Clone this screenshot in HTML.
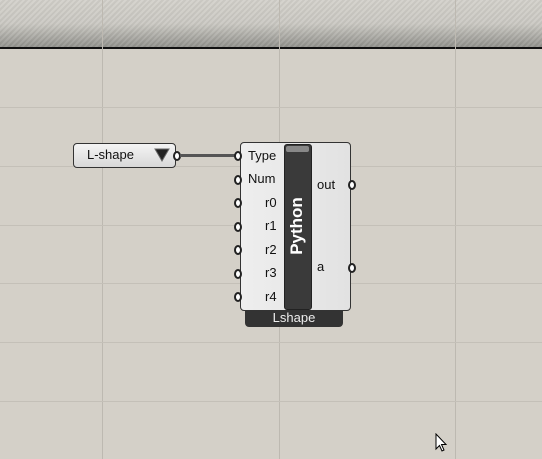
<!DOCTYPE html><html><head><style>
body{margin:0;width:542px;height:459px;overflow:hidden;background:#d4d0c8;font-family:"Liberation Sans",sans-serif;position:relative}
.top{position:absolute;left:0;top:0;width:542px;height:47px;background:linear-gradient(#d2d0ca,#cac8c2 50%,#92928d);}
.top:after{content:"";position:absolute;inset:0;background:repeating-linear-gradient(135deg,rgba(255,255,255,.08) 0 2px,rgba(0,0,0,.04) 2px 4px)}
.bl{position:absolute;left:0;top:47px;width:542px;height:2px;background:#111}
.v{position:absolute;top:0;width:1px;height:459px;background:#bdb9b1}
.h{position:absolute;left:0;height:1px;width:542px;background:#c4c0b8}
.abs{position:absolute}
.g{position:absolute;width:4px;height:6px;border:2px solid #222;border-radius:50%;background:#fff}
.lab{position:absolute;font-size:13px;color:#111}
</style></head><body>
<div class="top"></div><div class="bl"></div>
<div class="v" style="left:102px"></div><div class="v" style="left:279px"></div><div class="v" style="left:455px"></div>
<div class="h" style="top:107px"></div><div class="h" style="top:166px"></div><div class="h" style="top:225px"></div><div class="h" style="top:283px"></div><div class="h" style="top:342px"></div><div class="h" style="top:401px"></div>
<div class="abs" style="left:73px;top:143px;width:101px;height:23px;border:1px solid #333;border-radius:4px;background:linear-gradient(#f4f4f4,#d8d8d8)"></div>
<div class="lab" style="left:87px;top:147px">L-shape</div>
<svg class="abs" style="left:154px;top:148px" width="16" height="14"><polygon points="1,1 15,1 8,13" fill="#222" stroke="#666"/></svg>
<div class="g" style="left:173px;top:151px"></div>
<div class="abs" style="left:180px;top:154px;width:56px;height:3px;background:#555"></div>
<div class="abs" style="left:245px;top:306px;width:98px;height:21px;background:#333;border-radius:0 0 4px 4px"></div>
<div class="abs" style="left:245px;top:310px;width:98px;text-align:center;font-size:13px;color:#eee">Lshape</div>
<div class="abs" style="left:240px;top:142px;width:109px;height:167px;border:1px solid #333;border-radius:4px;background:linear-gradient(90deg,#eee,#e2e2e2)"></div>
<div class="abs" style="left:284px;top:144px;width:26px;height:164px;background:#3a3a3a;border:1px solid #222;border-radius:3px"></div>
<div class="abs" style="left:286px;top:146px;width:23px;height:6px;background:#888;border-radius:2px"></div>
<div class="abs" style="left:297px;top:226px;transform:translate(-50%,-50%) rotate(-90deg);color:#fff;font-size:17px;font-weight:bold">Python</div>
<div class="lab" style="left:248px;top:148px">Type</div>
<div class="lab" style="left:248px;top:171px">Num</div>
<div class="lab" style="left:265px;top:195px">r0</div>
<div class="lab" style="left:265px;top:218px">r1</div>
<div class="lab" style="left:265px;top:242px">r2</div>
<div class="lab" style="left:265px;top:265px">r3</div>
<div class="lab" style="left:265px;top:289px">r4</div>
<div class="lab" style="left:317px;top:177px">out</div>
<div class="lab" style="left:317px;top:259px">a</div>
<div class="g" style="left:234px;top:151px"></div><div class="g" style="left:234px;top:175px"></div><div class="g" style="left:234px;top:198px"></div><div class="g" style="left:234px;top:222px"></div><div class="g" style="left:234px;top:245px"></div><div class="g" style="left:234px;top:269px"></div><div class="g" style="left:234px;top:292px"></div>
<div class="g" style="left:348px;top:180px"></div><div class="g" style="left:348px;top:263px"></div>
<svg class="abs" style="left:435px;top:433px" width="14" height="20"><path d="M1,1 L1,16 L4.5,12.5 L7,18 L9,17 L6.5,11.5 L11,11.5 Z" fill="#fff" stroke="#000"/></svg>
</body></html>
